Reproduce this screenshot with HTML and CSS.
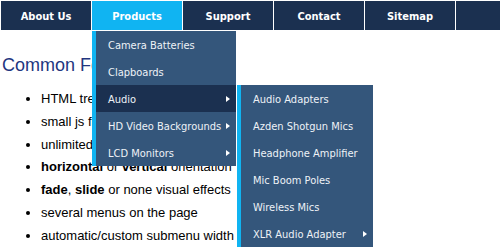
FILE: index.html
```html
<!DOCTYPE html>
<html lang="en">
<head>
    <meta charset="UTF-8">
    <meta name="viewport" content="width=device-width, initial-scale=1.0">
    <title>Menu - Common Features</title>
    <link rel="stylesheet" href="styles.css">
</head>
<body>
    <header class="topbar">
        <ul class="nav">
            <li class="nav-item"><a href="#">About Us</a></li>
            <li class="nav-item active">
                <a href="#">Products</a>
                <ul class="dropdown">
                    <li><a href="#">Camera Batteries</a></li>
                    <li><a href="#">Clapboards</a></li>
                    <li class="has-sub open">
                        <a href="#">Audio</a>
                        <ul class="dropdown submenu">
                            <li><a href="#">Audio Adapters</a></li>
                            <li><a href="#">Azden Shotgun Mics</a></li>
                            <li><a href="#">Headphone Amplifier</a></li>
                            <li><a href="#">Mic Boom Poles</a></li>
                            <li><a href="#">Wireless Mics</a></li>
                            <li class="has-sub"><a href="#">XLR Audio Adapter</a></li>
                        </ul>
                    </li>
                    <li class="has-sub"><a href="#">HD Video Backgrounds</a></li>
                    <li class="has-sub"><a href="#">LCD Monitors</a></li>
                </ul>
            </li>
            <li class="nav-item"><a href="#">Support</a></li>
            <li class="nav-item"><a href="#">Contact</a></li>
            <li class="nav-item"><a href="#">Sitemap</a></li>
            <li class="nav-item nav-rest"></li>
        </ul>
    </header>

    <main class="content">
        <h2>Common Features</h2>
        <ul class="features">
            <li>HTML tree-like structure</li>
            <li>small js file size</li>
            <li>unlimited menu levels</li>
            <li><b>horizontal</b> or <b>vertical</b> orientation</li>
            <li><b>fade</b>, <b>slide</b> or none visual effects</li>
            <li>several menus on the page</li>
            <li>automatic/custom submenu width</li>
        </ul>
    </main>
</body>
</html>
```

FILE: styles.css
```css
/* General */
body {
    margin: 0;
    background-color: #fff;
    color: #000;
    font-family: 'Liberation Sans', Arial, sans-serif;
    overflow: hidden;
}
ul {
    list-style: none;
    margin: 0;
    padding: 0;
}
a {
    text-decoration: none;
    color: inherit;
}

/* Top menu */
.topbar {
    padding-top: 1px;
}
.nav {
    display: flex;
    gap: 1px;
    padding-left: 1px;
    font-family: 'DejaVu Sans Condensed', 'DejaVu Sans', sans-serif;
    font-stretch: condensed;
}
.nav-item {
    position: relative;
    flex: 0 0 90px;
    height: 29px;
    background-color: #1b3050;
}
.nav-item.nav-rest {
    flex: 1 1 auto;
}
.nav-item > a {
    display: block;
    padding-top: 1px;
    line-height: 29px;
    text-align: center;
    font-size: 11px;
    font-weight: bold;
    color: #fff;
}
.nav-item.active {
    background-color: #10b4f2;
}

/* Dropdowns */
.dropdown {
    position: absolute;
    top: 30px;
    left: 0;
    z-index: 10;
    width: 140px;
    background-color: #34567b;
    border-left: 4px solid #10b4f2;
}
.dropdown li {
    position: relative;
    height: 27px;
}
.dropdown a {
    display: block;
    padding: 1px 0 0 12px;
    line-height: 27px;
    font-size: 11px;
    color: #eef2f7;
    white-space: nowrap;
}
.dropdown li.open {
    background-color: #1b3050;
}
.dropdown li.has-sub::after {
    content: "";
    position: absolute;
    top: 11px;
    right: 6px;
    border-left: 4px solid #fff;
    border-top: 3.5px solid transparent;
    border-bottom: 3.5px solid transparent;
}
.submenu {
    top: 0;
    left: calc(100% + 1px);
    width: 132px;
}

/* Content */
.content {
    padding: 0 2px;
}
.content h2 {
    margin: 25px 0 0;
    font-size: 18px;
    font-weight: normal;
    line-height: 20px;
    color: #22367f;
}
.features {
    margin-top: 13px;
    padding-left: 39px;
    list-style: disc;
}
.features li {
    font-size: 13px;
    line-height: 22.8px;
}
```
